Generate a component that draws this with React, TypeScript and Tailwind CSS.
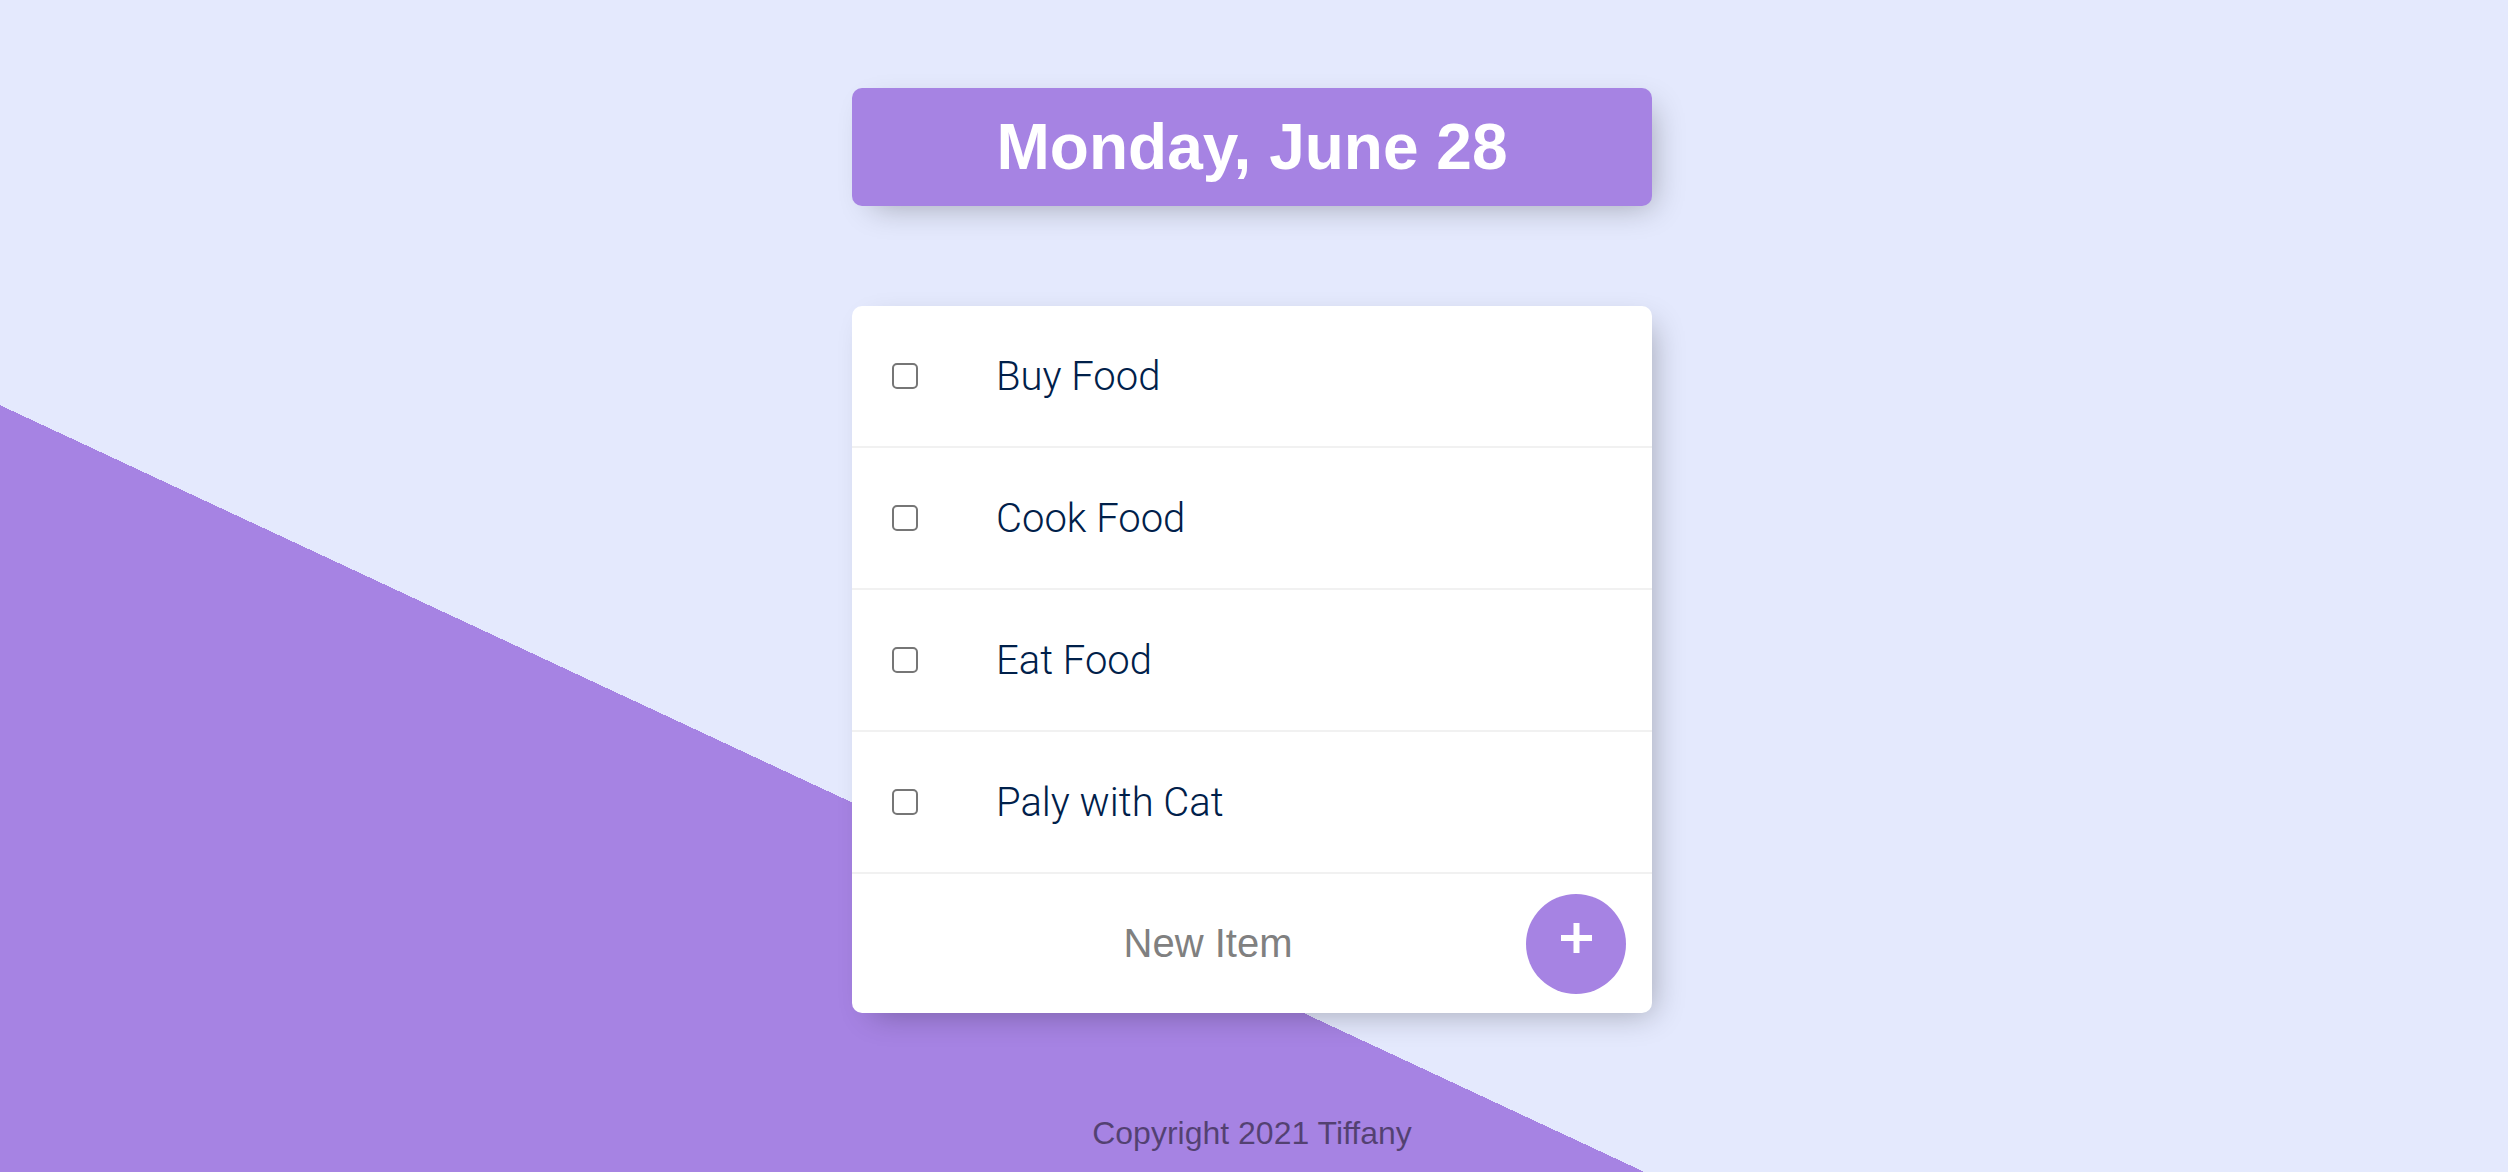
const items = ["Buy Food", "Cook Food", "Eat Food", "Paly with Cat"];

export default function App() {
  return (
    <div className="min-h-screen bg-[linear-gradient(25deg,#A683E3_32.75%,#E4E9FD_32.75%)] flex flex-col items-center pt-[88px] pr-[4px] font-['Liberation_Sans',Arial,sans-serif]">
      {/* heading */}
      <div className="w-[800px] rounded-[10px] bg-[#A683E3] shadow-[10px_10px_30px_-10px_rgba(0,0,0,0.3)]">
        <h1 className="py-[20px] text-center text-[64px] leading-[78px] font-bold text-white">
          Monday, June 28
        </h1>
      </div>

      {/* list */}
      <div className="mt-[100px] w-[800px] rounded-[10px] bg-white shadow-[10px_10px_30px_-10px_rgba(0,0,0,0.3)]">
        {items.map((item) => (
          <div key={item} className="flex items-center min-h-[142px] border-b-2 border-[#F1F1F1]">
            <input
              type="checkbox"
              className="appearance-none shrink-0 ml-[40px] w-[26px] h-[26px] rounded-[5px] border-2 border-[#767676] bg-white"
            />
            <p className="pl-[78px] pt-[2px] text-[40px] font-light text-[#00204a] font-['Roboto',sans-serif]">{item}</p>
          </div>
        ))}
        <form className="flex items-center h-[139px] pl-[38px] pr-[26px]" onSubmit={(e) => e.preventDefault()}>
          <input
            type="text"
            placeholder="New Item"
            className="flex-1 min-w-0 h-[120px] text-center text-[40px] outline-none placeholder:text-[#808080] placeholder:opacity-100"
          />
          <button type="submit" className="shrink-0 w-[100px] h-[100px] rounded-full bg-[#A683E3] flex items-center justify-center">
            <svg width="31" height="30" viewBox="0 0 31 30" className="-mt-[11px]">
              <path d="M15.5 0v30M0 15h31" stroke="#fff" strokeWidth="6" />
            </svg>
          </button>
        </form>
      </div>

      <footer className="mt-[102px] text-[32px] leading-[37px] text-black/50 text-center">
        Copyright 2021 Tiffany
      </footer>
    </div>
  );
}
